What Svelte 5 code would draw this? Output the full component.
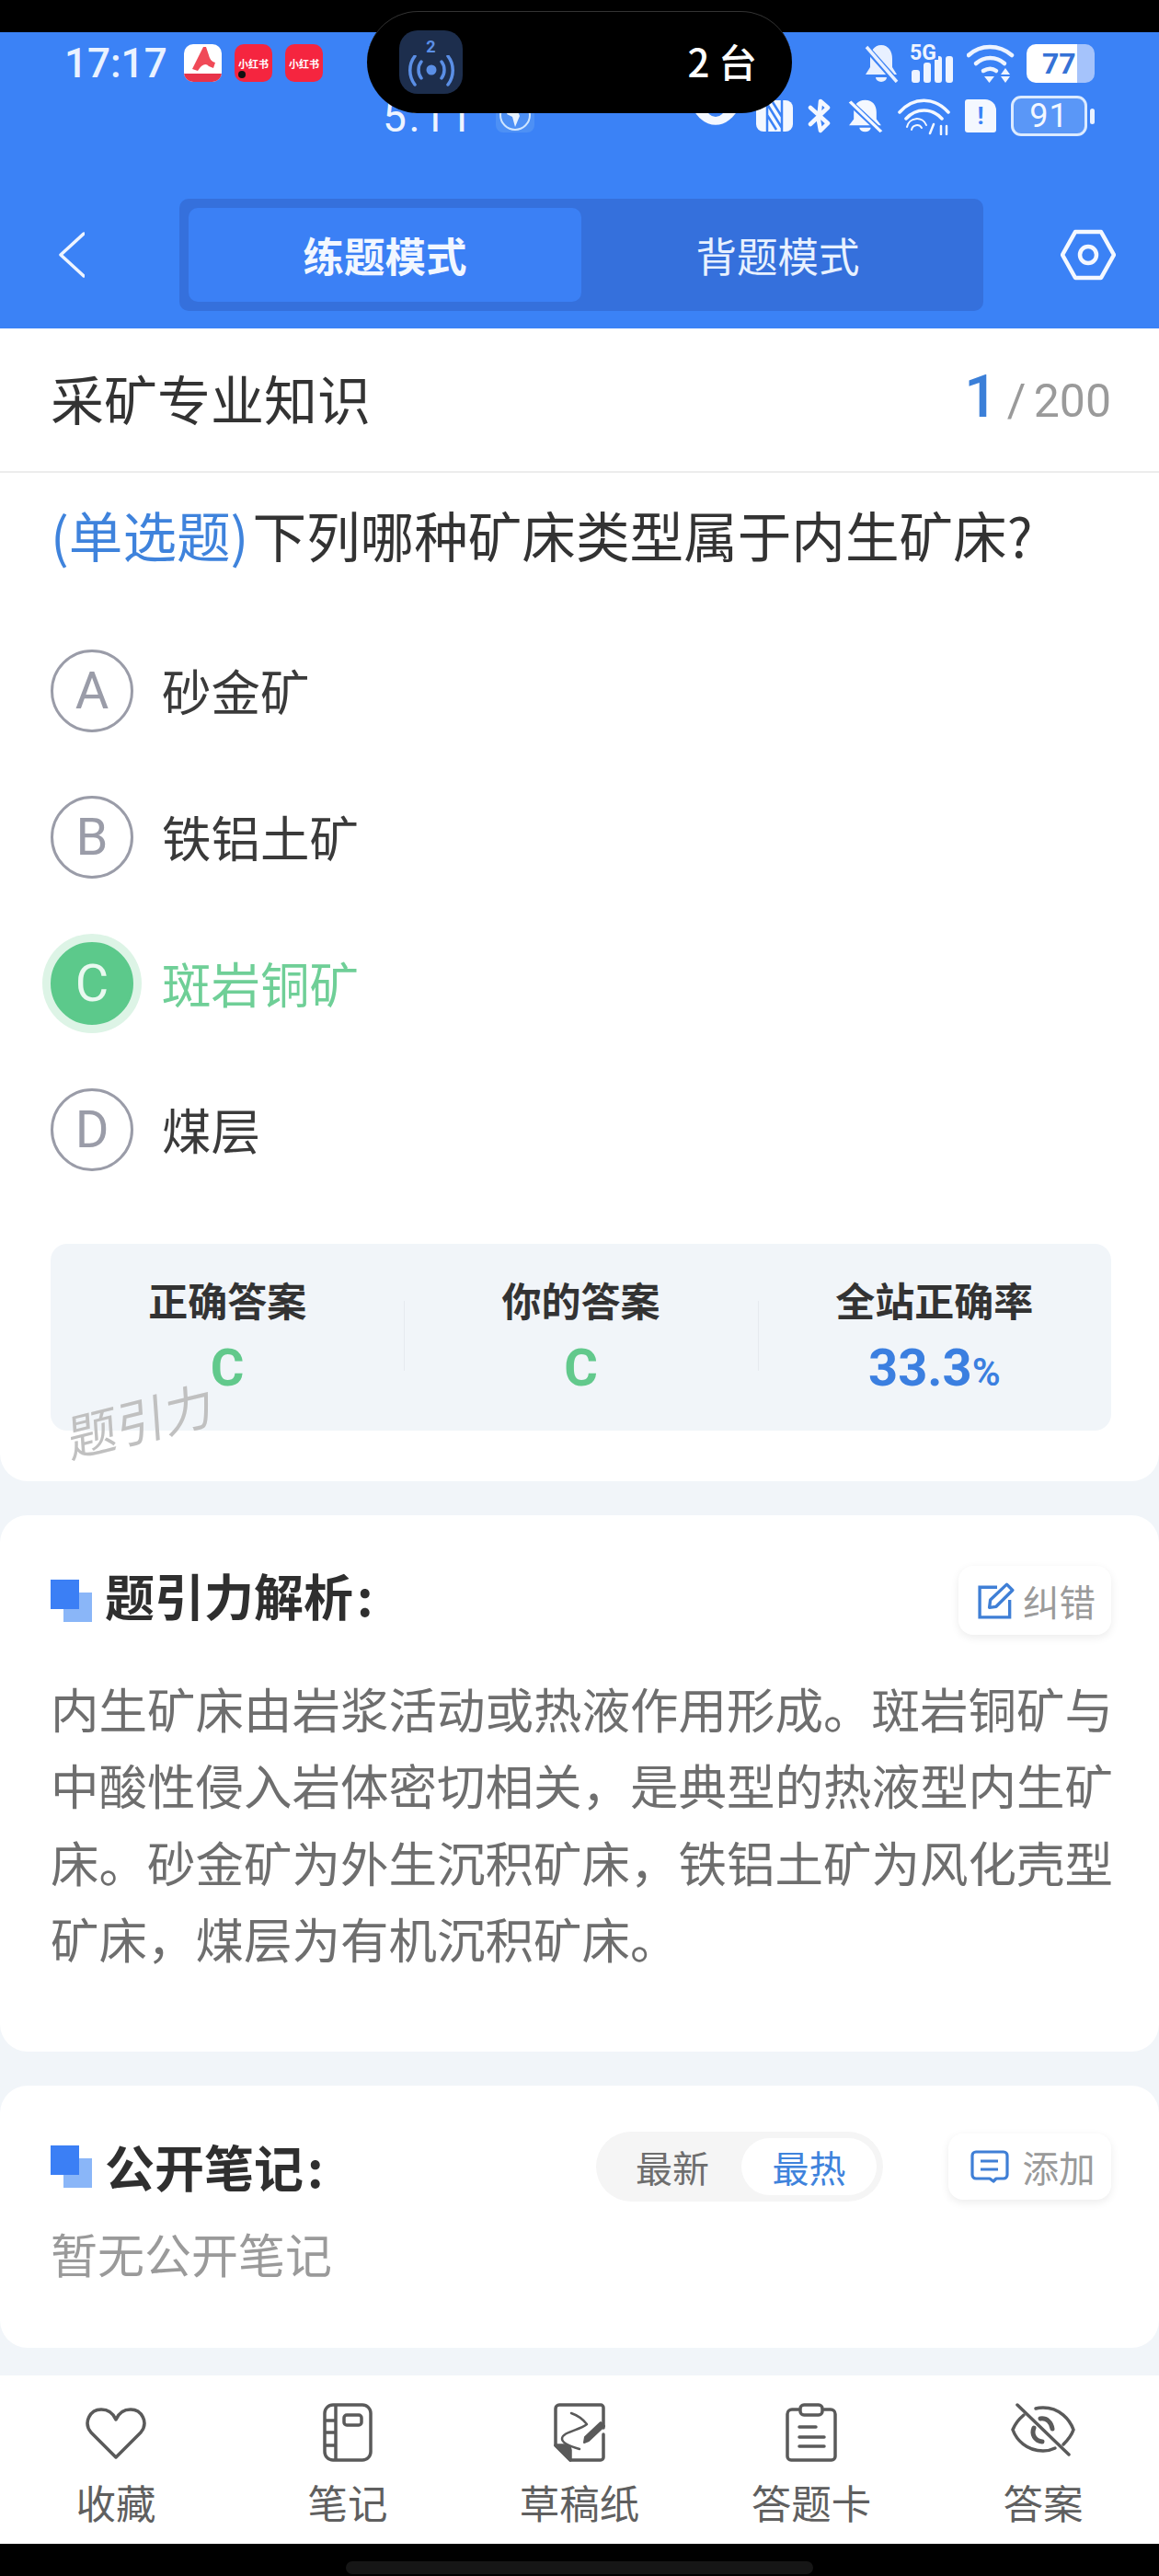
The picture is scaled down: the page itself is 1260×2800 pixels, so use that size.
<script>
  // Pantalla de pregunta: respuesta, análisis, notas y barra inferior.
  const options = [
    { key: 'A', text: '砂金矿' },
    { key: 'B', text: '铁铝土矿' },
    { key: 'C', text: '斑岩铜矿', right: true },
    { key: 'D', text: '煤层' }
  ];
  const analysis = [
    '内生矿床由岩浆活动或热液作用形成。斑岩铜矿与',
    '中酸性侵入岩体密切相关，是典型的热液型内生矿',
    '床。砂金矿为外生沉积矿床，铁铝土矿为风化壳型',
    '矿床，煤层为有机沉积矿床。'
  ];
</script>

<div class="screen">
  <div class="black-top"></div>

  <header class="header">
    <div class="status one">
      <span class="time">17:17</span>
      <span class="app white">
        <svg viewBox="0 0 41 41" width="41" height="41">
          <path d="M21 3 L9 27 L15 29 C19 22 24 20 27 24 L32 26 L34 20 C30 19 28 16 27 12 L24 3Z" fill="#f04a58" />
          <path d="M0 32 H41 V35 a6 6 0 0 1 -6 6 H6 a6 6 0 0 1 -6 -6Z" fill="#e8334a" />
        </svg>
      </span>
      <span class="app red">小红书<i class="dot"></i></span>
      <span class="app red">小红书</span>
      <span class="spacer"></span>
      <svg class="ic" width="38" height="42" viewBox="0 0 38 42">
        <path d="M19 1c8 0 12 7 12 15v9l5 8H2l5-8v-9C7 8 11 1 19 1Z" fill="#e8f0ff" />
        <path d="M13 36h12a6 5 0 0 1-12 0Z" fill="#e8f0ff" />
        <path d="M3 4 L35 40" stroke="#3b82f6" stroke-width="7" />
        <path d="M3 3 L36 41" stroke="#e8f0ff" stroke-width="3.5" />
      </svg>
      <span class="signal">
        <b>5G</b>
        <svg width="50" height="43" viewBox="0 0 50 43" fill="#eef4ff">
          <rect x="2" y="29" width="9" height="14" rx="3" /><rect x="15" y="21" width="8" height="22" rx="3" /><rect x="27" y="14" width="8" height="29" rx="3" /><rect x="39" y="14" width="8" height="29" rx="3" />
        </svg>
      </span>
      <svg class="ic wifi" width="52" height="43" viewBox="0 0 52 43" fill="none" stroke="#eef4ff" stroke-width="4.5" stroke-linecap="round">
        <path d="M2 13C15 1 35 1 49 13" /><path d="M10 22c9-8 22-8 31 0" /><path d="M18 30c5-3 10-3 14 0" />
        <path d="M19 36h11l-5.500 7Z" fill="#eef4ff" stroke="none" />
        <path d="M42 27l5 7h-10ZM42 43l5-7h-10Z" fill="#eef4ff" stroke="none" />
      </svg>
      <span class="batt-full"><em>77</em></span>
    </div>

    <div class="status two">
      <span class="time2">5:11</span>
      <span class="globe">
        <svg width="42" height="31" viewBox="0 0 42 31" fill="none" stroke="#cfe6ff" stroke-width="2">
          <circle cx="21" cy="12" r="16" /><path d="M15 2l8 4 3 7-5 12-3-11-6-3Z" fill="#e6f2ff" stroke="none" />
        </svg>
      </span>
      <span class="spacer"></span>
      <svg width="56" height="31" viewBox="0 0 56 31"><path d="M1 3C14 32 42 32 55 3Z" fill="#f4f8ff" /><circle cx="28" cy="6" r="10" fill="#3b82f6" /></svg>
      <svg width="40" height="34" viewBox="0 0 40 34" fill="none">
        <rect width="40" height="34" rx="8" fill="#f4f8ff" />
        <path d="M12 0v34M28 0v34M12 4l16 26M18 2l10 16M12 16l10 16" stroke="#3b82f6" stroke-width="2.500" />
      </svg>
      <svg width="27" height="38" viewBox="0 0 27 38" fill="none" stroke="#f4f8ff" stroke-width="4.500" stroke-linecap="round" stroke-linejoin="round">
        <path d="M3 10 L22 27 L14 35 L12 24 L14 3 L22 10 L3 28" />
      </svg>
      <svg width="39" height="36" viewBox="0 0 38 42" preserveAspectRatio="none">
        <path d="M19 1c8 0 12 7 12 15v9l5 8H2l5-8v-9C7 8 11 1 19 1Z" fill="#f4f8ff" />
        <path d="M13 36h12a6 5 0 0 1-12 0Z" fill="#f4f8ff" />
        <path d="M3 4 L35 40" stroke="#3b82f6" stroke-width="7" />
        <path d="M3 3 L36 41" stroke="#f4f8ff" stroke-width="3.500" />
      </svg>
      <svg width="57" height="42" viewBox="0 0 57 42" fill="none" stroke="#f4f8ff" stroke-width="3.500" stroke-linecap="round">
        <path d="M2 17C17 0 40 0 55 17" /><path d="M9 24c11-12 28-12 39 0" /><path d="M10 33a11 11 0 0 1 21-2" stroke-width="2" /><path d="M15 36a6 6 0 0 1 11-2" stroke-width="2" />
        <path d="M39 30l-4 10M47 32v9M53 32v9" stroke-width="2.500" />
      </svg>
      <span class="sim">!</span>
      <span class="batt-line"><em>91</em></span>
      <i class="batt-tip"></i>
    </div>

    <div class="nav-row">
      <svg class="back" width="28" height="50" viewBox="0 0 28 50" fill="none" stroke="#eef4ff" stroke-width="3.500" stroke-linecap="round" stroke-linejoin="round">
        <path d="M27 2 L2 25 L27 48" />
      </svg>
      <div class="track">
        <button class="tab active">练题模式</button>
        <button class="tab">背题模式</button>
      </div>
      <svg class="gear" width="60" height="56" viewBox="0 0 60 56" fill="none" stroke="#f4f8ff" stroke-width="4.500" stroke-linejoin="round">
        <path d="M16 3h28l14 25-14 25H16L2 28Z" /><circle cx="30" cy="28" r="9" />
      </svg>
    </div>
  </header>

  <div class="island">
    <span class="island-icon">
      <b>2</b>
      <svg width="52" height="34" viewBox="0 0 52 34" fill="none" stroke="#5b8fe6" stroke-width="3.500" stroke-linecap="round">
        <circle cx="26" cy="16" r="5.500" fill="#5b8fe6" stroke="none" />
        <path d="M15 7c-4 5-4 13 0 18M37 7c4 5 4 13 0 18M8 1C1 10 1 23 8 32M44 1c7 9 7 22 0 31" />
      </svg>
    </span>
    <span class="island-text">2 台</span>
  </div>

  <main class="content">
    <section class="card question">
      <div class="title-row">
        <h1>采矿专业知识</h1>
        <div class="count"><strong>1</strong><span>/ 200</span></div>
      </div>
      <p class="stem"><span>(单选题)</span>下列哪种矿床类型属于内生矿床?</p>

      <ul class="options">
        {#each options as o}
          <li class:right={o.right}>
            <span class="circle">{o.key}</span>
            <span class="opt-text">{o.text}</span>
          </li>
        {/each}
      </ul>

      <div class="stats">
        <div class="stat"><b>正确答案</b><strong class="green">C</strong></div>
        <div class="stat"><b>你的答案</b><strong class="green">C</strong></div>
        <div class="stat"><b>全站正确率</b><strong class="blue">33.3<small>%</small></strong></div>
      </div>
      <span class="watermark">题引力</span>
    </section>

    <section class="card analysis">
      <div class="sec-head">
        <span class="mark"></span>
        <h2>题引力解析<i>:</i></h2>
        <button class="chip">
          <svg width="42" height="40" viewBox="0 0 40 38" fill="none" stroke="#3f7fd6" stroke-width="3.200">
            <path d="M20 5H2v31h31V18" /><path d="M13 18 L30 2l6 6-17 17-7 1Z" stroke-linejoin="round" />
          </svg>
          纠错
        </button>
      </div>
      <div class="body">
        {#each analysis as line}
          <p>{line}</p>
        {/each}
      </div>
    </section>

    <section class="card notes">
      <div class="sec-head">
        <span class="mark"></span>
        <h2>公开笔记<i>:</i></h2>
        <div class="seg"><span>最新</span><span class="on">最热</span></div>
        <button class="chip add">
          <svg width="42" height="36" viewBox="0 0 42 36" fill="none" stroke="#3f7fd6" stroke-width="3.200" stroke-linejoin="round">
            <path d="M6 2h30a4 4 0 0 1 4 4v21a4 4 0 0 1-4 4h-8l-3 3-4-3H6a4 4 0 0 1-4-4V6a4 4 0 0 1 4-4Z" />
            <path d="M11 12h19M11 21h19" />
          </svg>
          添加
        </button>
      </div>
      <p class="empty">暂无公开笔记</p>
    </section>
  </main>

  <nav class="bottom">
    <div class="item">
      <svg class="heart" width="66" height="56" viewBox="0 0 66 56" fill="none" stroke="#5a5a5a" stroke-width="3.500" stroke-linejoin="round">
        <path d="M33 54 L6 27C-3 16 5 2 17 2c8 0 13 4 16 11C36 6 41 2 49 2c12 0 20 14 11 25Z" />
      </svg>
      <span>收藏</span>
    </div>
    <div class="item">
      <svg width="54" height="64" viewBox="0 0 54 64" fill="none" stroke="#5a5a5a" stroke-width="3.500">
        <rect x="2" y="2" width="50" height="60" rx="9" /><path d="M14 2v60M2 19h12M2 32h12M2 46h12" /><rect x="23" y="13" width="19" height="11" rx="3" />
      </svg>
      <span>笔记</span>
    </div>
    <div class="item">
      <svg width="56" height="64" viewBox="0 0 56 64" fill="none" stroke="#5a5a5a" stroke-width="3.500" stroke-linejoin="round" stroke-linecap="round">
        <path d="M54 27V5a3 3 0 0 0-3-3H6a4 4 0 0 0-4 4v40l16 16h33a3 3 0 0 0 3-3V34" />
        <path d="M2 46h11a5 5 0 0 1 5 5v11Z" fill="#5a5a5a" />
        <path d="M19 11c6 2 13 7 17 12-8 7-27 8-27 16 0 4 9 8 19 11" stroke-width="2.500" />
        <path d="M33 43l1-6 17-16 4 4-17 16Z" fill="#5a5a5a" stroke-width="2" />
      </svg>
      <span>草稿纸</span>
    </div>
    <div class="item">
      <svg width="56" height="64" viewBox="0 0 56 64" fill="none" stroke="#5a5a5a" stroke-width="3.500" stroke-linecap="round">
        <path d="M14 7H7a5 5 0 0 0-5 5v46a4 4 0 0 0 4 4h44a4 4 0 0 0 4-4V12a5 5 0 0 0-5-5h-7" /><rect x="16" y="2" width="24" height="11" rx="4" /><path d="M15 26h18M15 37h27M15 47h27" />
      </svg>
      <span>答题卡</span>
    </div>
    <div class="item">
      <svg width="72" height="58" viewBox="0 0 72 58" fill="none" stroke="#5a5a5a" stroke-width="3.500" stroke-linecap="round">
        <path d="M8 2 L64 56" /><path d="M15 13C9 18 5 24 3 29c4 11 15 23 33 23 5 0 9-1 13-3M28 6c3-1 5-1 8-1 18 0 29 13 33 24-2 6-6 11-11 16" /><path d="M26 27c-3 7 1 14 9 15M33 17c7-1 12 4 13 11" stroke-width="5" />
      </svg>
      <span>答案</span>
    </div>
  </nav>

  <div class="black-bottom"><i></i></div>
</div>

<style>
  :global(body) {
    margin: 0;
    background: #000;
  }

  .screen {
    position: relative;
    width: 1260px;
    height: 2800px;
    display: flex;
    flex-direction: column;
    overflow: hidden;
    background: #f1f5f9;
    font-family: "Noto Sans CJK SC", "Noto Sans", sans-serif;
  }

  .black-top {
    height: 35px;
    background: #000;
    flex: none;
  }

  .header {
    height: 322px;
    flex: none;
    box-sizing: border-box;
    background: #3b82f6;
    display: flex;
    flex-direction: column;
  }

  .status {
    display: flex;
    align-items: center;
  }

  .spacer {
    flex: 1;
  }

  .status.one {
    height: 43px;
    margin-top: 12px;
    padding: 0 74px 0 70px;
  }

  .time {
    width: 130px;
    font: 500 44px/1 Roboto, sans-serif;
    color: #eaf2ff;
  }

  .app {
    width: 41px;
    height: 41px;
    margin-right: 14px;
    border-radius: 10px;
    overflow: hidden;
    position: relative;
    display: flex;
    align-items: center;
    justify-content: center;
    flex: none;
  }

  .app.white {
    background: #fff;
  }

  .app.red {
    background: #f5253f;
    color: #fff;
    font-size: 11px;
    font-weight: 700;
    white-space: nowrap;
  }

  .dot {
    position: absolute;
    left: 4px;
    bottom: 4px;
    width: 8px;
    height: 8px;
    border-radius: 50%;
    background: #111;
  }

  .ic {
    flex: none;
  }

  .signal {
    position: relative;
    margin-left: 12px;
    display: flex;
  }

  .signal b {
    position: absolute;
    left: 0;
    top: -1px;
    font: 700 23px/1 Roboto, sans-serif;
    color: #eef4ff;
  }

  .signal svg {
    clip-path: polygon(0 42%, 62% 42%, 62% 28%, 100% 28%, 100% 100%, 0 100%);
  }

  .wifi {
    margin-left: 12px;
  }

  .batt-full {
    width: 74px;
    height: 42px;
    margin-left: 13px;
    margin-right: -4px;
    box-sizing: border-box;
    padding-left: 17px;
    border-radius: 10px;
    background: linear-gradient(90deg, #fff 75%, #a5c3fb 75%);
    display: flex;
    align-items: center;
  }

  .batt-full em {
    font: normal 700 32px/1 Roboto, sans-serif;
    color: #3572d6;
  }

  .status.two {
    height: 44px;
    margin-top: 14px;
    padding: 0 70px 0 416px;
    gap: 16px;
  }

  .time2 {
    font: 400 46px/1 Roboto, sans-serif;
    letter-spacing: 3px;
    color: #eef4ff;
    margin-top: 2px;
  }

  .globe {
    width: 42px;
    height: 31px;
    margin-left: 6px;
    margin-top: 4px;
    border-radius: 0 0 8px 8px;
    background: #4d90f5;
    overflow: hidden;
  }

  .sim {
    width: 34px;
    height: 36px;
    border-radius: 3px 12px 3px 3px;
    background: #f4f8ff;
    color: #3b82f6;
    font: 700 26px/36px Roboto, sans-serif;
    text-align: center;
  }

  .batt-line {
    width: 83px;
    height: 44px;
    box-sizing: border-box;
    border: 3px solid #dcebff;
    border-radius: 11px;
    background: #5a97f7;
    display: flex;
    align-items: center;
    justify-content: center;
  }

  .batt-line em {
    font: normal 400 36px/1 Roboto, sans-serif;
    color: #f4f8ff;
    letter-spacing: 1px;
  }

  .batt-tip {
    width: 5px;
    height: 17px;
    margin-left: -13px;
    border-radius: 3px;
    background: #eaf2ff;
  }

  .nav-row {
    margin-top: 68px;
    display: flex;
    align-items: center;
    padding: 0 47px 0 64px;
  }

  .back {
    flex: none;
  }

  .track {
    width: 875px;
    height: 122px;
    margin-left: 103px;
    padding: 10px;
    box-sizing: border-box;
    display: flex;
    border-radius: 10px;
    background: #3570dc;
  }

  .tab {
    flex: 1;
    border: 0;
    padding: 0;
    background: transparent;
    border-radius: 10px;
    font: 400 44.500px/1 "Noto Sans CJK SC", sans-serif;
    color: #e8f1ff;
  }

  .tab.active {
    flex: 0 0 427px;
    background: #3b80f5;
    font-weight: 700;
    color: #f2f7ff;
  }

  .gear {
    margin-left: 84px;
    flex: none;
  }

  .island {
    position: absolute;
    left: 399px;
    top: 12px;
    width: 462px;
    height: 111px;
    box-sizing: border-box;
    padding: 21px 38px 0 35px;
    display: flex;
    justify-content: space-between;
    background: #000;
    border-radius: 56px;
    box-shadow: inset 0 1px 0 #333;
  }

  .island-icon {
    position: relative;
    width: 69px;
    height: 69px;
    border-radius: 20px;
    background: #1d2e4d;
    display: flex;
    flex-direction: column;
    align-items: center;
    padding-top: 9px;
    box-sizing: border-box;
  }

  .island-icon b {
    font: 700 18px/1 Roboto, sans-serif;
    color: #5b8fe6;
  }

  .island-text {
    font: 500 42px/1 "Noto Sans CJK SC", sans-serif;
    color: #fff;
    margin-top: 12px;
    white-space: pre;
  }

  .content {
    flex: 1;
    display: flex;
    flex-direction: column;
    gap: 37px;
  }

  .card {
    background: #fff;
    border-radius: 30px;
    position: relative;
    box-sizing: border-box;
  }

  .question {
    height: 1253px;
    border-radius: 0 0 30px 30px;
  }

  .title-row {
    height: 157px;
    box-sizing: border-box;
    padding: 0 52px 6px 55px;
    border-bottom: 2px solid #ececec;
    display: flex;
    align-items: center;
    justify-content: space-between;
  }

  h1 {
    margin: 0;
    font-size: 58px;
    font-weight: 400;
    color: #333;
  }

  .count {
    display: flex;
    align-items: baseline;
    gap: 10px;
    font-family: Roboto, sans-serif;
  }

  .count strong {
    font-size: 64px;
    font-weight: 500;
    color: #3b7fd8;
  }

  .count span {
    font-size: 50px;
    color: #9a9a9a;
    word-spacing: -4px;
  }

  .stem {
    margin: 0;
    padding: 28px 55px 0;
    font-size: 58.600px;
    line-height: 78px;
    color: #333;
    white-space: nowrap;
  }

  .stem span {
    color: #3f83dc;
    margin-right: 4px;
  }

  .options {
    list-style: none;
    margin: 86px 0 0;
    padding: 0 55px;
    display: flex;
    flex-direction: column;
    gap: 69px;
  }

  .options li {
    height: 90px;
    display: flex;
    align-items: center;
    gap: 31px;
    font-size: 53.500px;
    color: #3a3a3a;
  }

  .opt-text {
    margin-bottom: 3px;
  }

  .circle {
    width: 90px;
    height: 90px;
    box-sizing: border-box;
    border: 3px solid #9a9ca8;
    border-radius: 50%;
    display: flex;
    align-items: center;
    justify-content: center;
    font: 400 56px/1 Roboto, sans-serif;
    color: #9a9ca8;
  }

  .right {
    color: #6fcf97 !important;
  }

  .right .circle {
    background: #5cc98b;
    border-color: #5cc98b;
    color: #e9f9f0;
    box-shadow: 0 0 0 9px #ddf4e6;
  }

  .stats {
    margin: 79px 52px 0 55px;
    height: 203px;
    border-radius: 18px;
    background: #f1f5f9;
    display: grid;
    grid-template-columns: repeat(3, 1fr);
  }

  .stat {
    position: relative;
    display: flex;
    flex-direction: column;
    align-items: center;
    padding-top: 30px;
  }

  .stat + .stat::before {
    content: '';
    position: absolute;
    left: 0;
    top: 62px;
    height: 76px;
    width: 1px;
    background: #e6eaef;
  }

  .stat b {
    font-size: 43px;
    line-height: 60px;
    font-weight: 700;
    color: #333;
  }

  .stat strong {
    margin-top: 15px;
    font: 700 56px/60px Roboto, sans-serif;
  }

  .stat small {
    font-size: 42px;
    font-weight: 600;
  }

  .green {
    color: #62c98c;
  }

  .blue {
    color: #3b7fe0;
  }

  .watermark {
    position: absolute;
    left: 72px;
    top: 1158px;
    font-size: 54px;
    line-height: 1;
    font-weight: 400;
    color: #c0c0c0;
    transform: rotate(-14deg) skewX(-10deg);
  }

  .analysis {
    height: 583px;
    padding: 55px 52px 0 55px;
  }

  .analysis h2 {
    margin-bottom: 12px;
  }

  .sec-head {
    height: 75px;
    display: flex;
    align-items: center;
  }

  .mark {
    position: relative;
    width: 45px;
    height: 46px;
    margin-right: 14px;
    flex: none;
  }

  .mark::before,
  .mark::after {
    content: '';
    position: absolute;
    width: 31px;
    height: 32px;
  }

  .mark::after {
    left: 14px;
    top: 14px;
    background: #8ab6f8;
  }

  .mark::before {
    left: 0;
    top: 0;
    background: #3b7ff5;
    z-index: 1;
  }

  h2 {
    margin: 0;
    flex: 1;
    font-size: 54px;
    font-weight: 700;
    color: #2f2f2f;
  }

  h2 i {
    font-style: normal;
    margin-left: 4px;
  }

  .chip {
    height: 75px;
    width: 166px;
    border: 0;
    border-radius: 16px;
    background: #fff;
    box-shadow: 0 3px 10px rgba(0, 0, 0, 0.08);
    display: flex;
    align-items: center;
    justify-content: center;
    gap: 7px;
    font: 400 39.500px/1 "Noto Sans CJK SC", sans-serif;
    color: #9a9a9a;
    padding: 0 0 0 4px;
  }

  .chip.add {
    width: 177px;
    height: 72px;
    gap: 15px;
    padding-left: 6px;
  }

  .body {
    margin-top: 38px;
  }

  .body p {
    margin: 0;
    font-size: 52.500px;
    line-height: 83.300px;
    color: #6e6e6e;
    white-space: nowrap;
  }

  .notes {
    height: 285px;
    padding: 50px 52px 0 55px;
  }

  .seg {
    flex: none;
    width: 312px;
    height: 76px;
    margin-right: 71px;
    box-sizing: border-box;
    padding: 7px 7px 7px 0;
    border-radius: 38px;
    background: #f5f5f5;
    display: flex;
    font-size: 40px;
    color: #6e6e6e;
  }

  .seg span {
    flex: 0 0 158px;
    line-height: 62px;
    text-align: center;
    padding-left: 8px;
    box-sizing: border-box;
  }

  .seg .on {
    flex: 0 0 147px;
    padding-left: 0;
    border-radius: 31px;
    background: #fff;
    color: #3f83dc;
  }

  .empty {
    margin: 22px 0 0;
    font-size: 51px;
    line-height: 70px;
    color: #9a9a9a;
  }

  .bottom {
    height: 183px;
    flex: none;
    background: #fff;
    display: grid;
    grid-template-columns: repeat(5, 252px);
  }

  .item {
    height: 183px;
    position: relative;
    display: flex;
    flex-direction: column;
    align-items: center;
    justify-content: flex-end;
    padding-bottom: 15px;
    box-sizing: border-box;
    font-size: 43.500px;
    line-height: 60px;
    color: #5f5f5f;
  }

  .item svg {
    position: absolute;
    top: 30px;
  }

  .item .heart {
    top: 35px;
  }

  .black-bottom {
    height: 35px;
    flex: none;
    background: #000;
    display: flex;
    justify-content: center;
    align-items: flex-end;
    padding-bottom: 2px;
    box-sizing: border-box;
  }

  .black-bottom i {
    width: 508px;
    height: 14px;
    border-radius: 7px;
    background: #161616;
  }
</style>
